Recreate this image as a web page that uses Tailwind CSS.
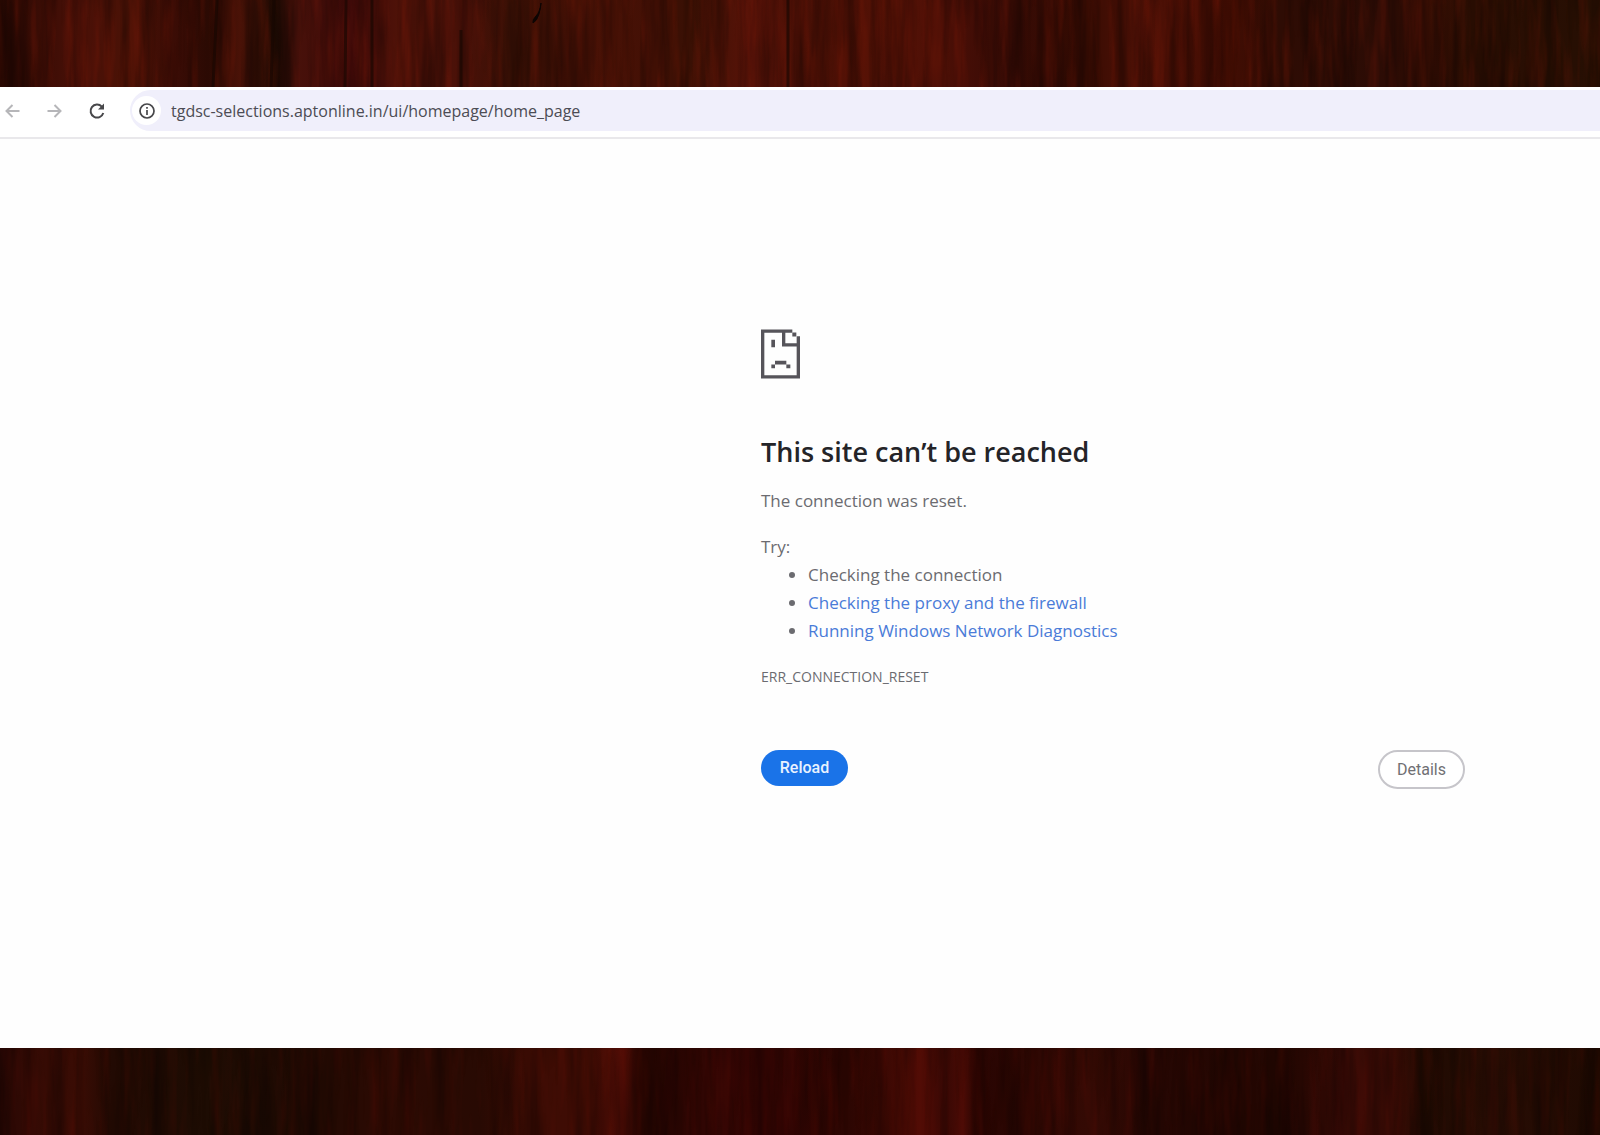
<!DOCTYPE html>
<html lang="en">
<head>
<meta charset="utf-8">
<meta name="viewport" content="width=device-width, initial-scale=1">
<title>tgdsc-selections.aptonline.in</title>
<script src="https://cdn.jsdelivr.net/npm/@tailwindcss/browser@4"></script>
</head>
<body class="flex min-h-screen flex-col bg-[#fefefe] font-['Open_Sans',sans-serif] text-[#6b6b70]">

<!-- Wood band above the browser -->
<div class="h-[87px] shrink-0 overflow-hidden bg-[#380d04]" aria-hidden="true">
  <svg class="block size-full" viewBox="0 0 1600 87" preserveAspectRatio="none">
    <defs>
      <linearGradient id="woodTop">
        <stop offset="0" stop-color="#2a0903"/><stop offset=".05" stop-color="#4a1007"/><stop offset=".08" stop-color="#4a1206"/>
        <stop offset=".11" stop-color="#3a0c05"/><stop offset=".13" stop-color="#2b0a03"/><stop offset=".15" stop-color="#4a1207"/>
        <stop offset=".172" stop-color="#1e0b03"/><stop offset=".185" stop-color="#48110a"/><stop offset=".22" stop-color="#3d0a08"/>
        <stop offset=".25" stop-color="#4f1208"/><stop offset=".29" stop-color="#4a1108"/><stop offset=".32" stop-color="#381005"/>
        <stop offset=".36" stop-color="#4b1206"/><stop offset=".41" stop-color="#431005"/><stop offset=".43" stop-color="#381004"/>
        <stop offset=".47" stop-color="#5a1308"/><stop offset=".51" stop-color="#460f05"/><stop offset=".56" stop-color="#561206"/>
        <stop offset=".6" stop-color="#470e06"/><stop offset=".63" stop-color="#360b05"/><stop offset=".68" stop-color="#380c03"/>
        <stop offset=".71" stop-color="#501106"/><stop offset=".77" stop-color="#420d03"/><stop offset=".8" stop-color="#2e0c04"/>
        <stop offset=".87" stop-color="#2c0c05"/><stop offset=".89" stop-color="#3c0f04"/><stop offset=".92" stop-color="#2b0e03"/>
        <stop offset="1" stop-color="#260f03"/>
      </linearGradient>
      <filter id="grainTop" x="0" y="0" width="100%" height="100%" color-interpolation-filters="sRGB">
        <feTurbulence type="fractalNoise" baseFrequency="0.07 0.005" numOctaves="4" seed="8"/>
        <feColorMatrix values="0 0 0 0 0  0 0 0 0 0  0 0 0 0 0  2.6 0 0 0 -1.05"/>
      </filter>
      <filter id="shineTop" x="0" y="0" width="100%" height="100%" color-interpolation-filters="sRGB">
        <feTurbulence type="fractalNoise" baseFrequency="0.09 0.01" numOctaves="3" seed="21"/>
        <feColorMatrix values="0 0 0 0 .55  0 0 0 0 .11  0 0 0 0 .04  2.4 0 0 0 -1.1"/>
      </filter>
    </defs>
    <rect width="1600" height="87" fill="url(#woodTop)"/>
    <rect width="1600" height="87" filter="url(#shineTop)" opacity=".3"/>
    <rect width="1600" height="87" filter="url(#grainTop)" opacity=".32"/>
    <path d="M217 0l-4 87M274 0l-3 87M346 0l-1 87M372 0v87M461 30v57M788 0v87" stroke="#170702" stroke-width="3" opacity=".65"/>
    <path d="M541 3q-1 9-5 13t-3 7q4-2 6-9t2-11z" fill="#0d0503" stroke="#0d0503"/>
  </svg>
</div>

<!-- Browser toolbar -->
<header class="flex h-[52px] shrink-0 items-center border-b-2 border-[#e9e8eb] bg-white">
  <nav class="flex w-[130px] shrink-0 items-center gap-[18px] pb-[3px] pl-px" aria-label="Navigation">
    <button type="button" class="grid size-6 place-items-center text-[#b6b6b9]" aria-label="Back">
      <svg class="size-6" viewBox="0 0 24 24" fill="none" stroke="currentColor" stroke-width="2"><path d="M18.500 12H6M11.500 6L5.500 12l6 6"/></svg>
    </button>
    <button type="button" class="grid size-6 place-items-center text-[#b6b6b9]" aria-label="Forward">
      <svg class="size-6" viewBox="0 0 24 24" fill="none" stroke="currentColor" stroke-width="2"><path d="M4.500 12h12.500M11.500 6l6 6-6 6"/></svg>
    </button>
    <button type="button" class="grid size-6 place-items-center text-[#47474a]" aria-label="Reload page">
      <svg class="size-6" viewBox="0 0 24 24" fill="none" stroke="currentColor" stroke-width="2"><path d="M18.300 14A6.500 6.500 0 1 1 16.800 7.600L18 8.800"/><path d="M19 4.500v6h-6l6-6z" fill="currentColor" stroke="none"/></svg>
    </button>
  </nav>
  <form class="mb-[3px] flex h-[41px] flex-1 items-center gap-[10px] rounded-l-full bg-[#f0effb] pl-[2px]">
    <button type="button" class="grid size-[29px] shrink-0 place-items-center rounded-full bg-white text-[#47474a]" aria-label="Site information">
      <svg class="size-[18px]" viewBox="0 0 18 18" fill="none" stroke="currentColor" stroke-width="1.700"><circle cx="9" cy="9" r="7"/><path d="M9 8v5M9 5v1.800"/></svg>
    </button>
    <input type="text" aria-label="Address" value="tgdsc-selections.aptonline.in/ui/homepage/home_page" class="h-8 flex-1 bg-transparent text-[16px] text-[#4c4c54] outline-none">
  </form>
</header>

<!-- Error page -->
<main class="flex flex-1 justify-end pt-[190px] pr-[135px]">
  <div class="w-[704px]">
    <svg class="h-[50px] w-[39px]" viewBox="0 0 117 147" fill="#56545a" role="img" aria-label="Page unavailable">
      <path d="M0 0H94V10H73V41H107V20H117V147H0ZM10 10V137H107V51H63V10Z" fill-rule="evenodd"/>
      <path d="M94 9h12v12H94zM31 31h11v22H31zM42 94h34v11H42zM31 105h11v11H31zM76 105h12v11H76z"/>
    </svg>
    <h1 class="mt-[53px] text-[27px] leading-[40px] font-semibold text-[#242428]">This site can’t be reached</h1>
    <p class="mt-[15px] text-[17px] leading-[28px]">The connection was reset.</p>
    <div class="mt-[18px] text-[17px] leading-[28px]">
      <p>Try:</p>
      <ul class="list-disc pl-[47px]">
        <li>Checking the connection</li>
        <li><a href="#" class="text-[#4a7bd8]">Checking the proxy and the firewall</a></li>
        <li><a href="#" class="text-[#4a7bd8]">Running Windows Network Diagnostics</a></li>
      </ul>
    </div>
    <p class="mt-[18px] text-[14px] leading-[28px]">ERR_CONNECTION_RESET</p>
    <div class="mt-[59px] flex items-start justify-between font-['Roboto',sans-serif] text-[16px]">
      <button type="button" class="h-9 w-[87px] rounded-full bg-[#1a73e8] font-medium text-[#e8f2ff]">Reload</button>
      <button type="button" class="h-[39px] w-[87px] rounded-full border-2 border-[#c6c5ca] bg-white text-[#707074]">Details</button>
    </div>
  </div>
</main>

<!-- Wood band below the browser -->
<div class="h-[87px] shrink-0 overflow-hidden bg-[#280903]" aria-hidden="true">
  <svg class="block size-full" viewBox="0 0 1600 87" preserveAspectRatio="none">
    <defs>
      <linearGradient id="woodBottom">
        <stop offset="0" stop-color="#2a0804"/><stop offset=".03" stop-color="#360b04"/><stop offset=".05" stop-color="#3a0c04"/>
        <stop offset=".07" stop-color="#220a03"/><stop offset=".13" stop-color="#1d0c03"/><stop offset=".19" stop-color="#200a03"/>
        <stop offset=".24" stop-color="#2c0a03"/><stop offset=".3" stop-color="#280a03"/><stop offset=".33" stop-color="#3c0c04"/>
        <stop offset=".37" stop-color="#400c04"/><stop offset=".388" stop-color="#580e06"/><stop offset=".4" stop-color="#260602"/>
        <stop offset=".44" stop-color="#300603"/><stop offset=".48" stop-color="#330503"/><stop offset=".53" stop-color="#2c0602"/>
        <stop offset=".55" stop-color="#380803"/><stop offset=".575" stop-color="#520c05"/><stop offset=".59" stop-color="#360804"/>
        <stop offset=".602" stop-color="#4c0b05"/><stop offset=".61" stop-color="#280502"/>
        <stop offset=".68" stop-color="#340a04"/><stop offset=".72" stop-color="#260703"/><stop offset=".8" stop-color="#230702"/>
        <stop offset=".84" stop-color="#360a05"/><stop offset=".87" stop-color="#3c0c05"/><stop offset=".89" stop-color="#1e0a02"/>
        <stop offset=".93" stop-color="#290d04"/><stop offset="1" stop-color="#1f0a02"/>
      </linearGradient>
      <filter id="grainBottom" x="0" y="0" width="100%" height="100%" color-interpolation-filters="sRGB">
        <feTurbulence type="fractalNoise" baseFrequency="0.06 0.005" numOctaves="4" seed="4"/>
        <feColorMatrix values="0 0 0 0 0  0 0 0 0 0  0 0 0 0 0  2.6 0 0 0 -1.05"/>
      </filter>
      <filter id="shineBottom" x="0" y="0" width="100%" height="100%" color-interpolation-filters="sRGB">
        <feTurbulence type="fractalNoise" baseFrequency="0.09 0.01" numOctaves="3" seed="13"/>
        <feColorMatrix values="0 0 0 0 .45  0 0 0 0 .06  0 0 0 0 .03  2.4 0 0 0 -1.1"/>
      </filter>
    </defs>
    <rect width="1600" height="87" fill="url(#woodBottom)"/>
    <rect width="1600" height="87" filter="url(#shineBottom)" opacity=".2"/>
    <rect width="1600" height="87" filter="url(#grainBottom)" opacity=".3"/>
  </svg>
</div>

</body>
</html>
